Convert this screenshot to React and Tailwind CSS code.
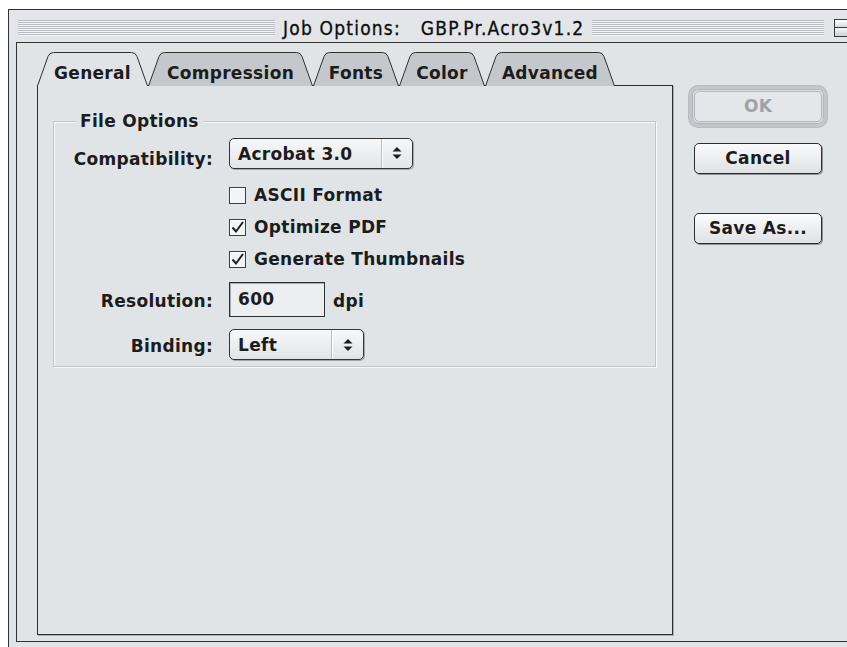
import React from 'react'

// Platinum-style "Job Options" dialog
const TABS = [
  { label: 'General', width: 111, active: true },
  { label: 'Compression', width: 165 },
  { label: 'Fonts', width: 86 },
  { label: 'Color', width: 86 },
  { label: 'Advanced', width: 130 },
]

function Tab({ label, width, active }) {
  const w = width
  const d = `M0.5 34 L11 4.5 Q12.4 0.5 16.5 0.5 L${w - 16.5} 0.5 Q${w - 12.4} 0.5 ${w - 11} 4.5 L${w - 0.5} 34`
  return (
    <div className={`relative h-[33px] shrink-0 ${active ? 'z-10' : ''}`} style={{ width: w }}>
      <svg className="absolute left-0 top-0 overflow-visible" width={w} height={34} viewBox={`0 0 ${w} 34`}>
        <path d={d} fill={active ? '#e1e4e7' : '#c4c8cd'} stroke="#2f2f2f" strokeWidth="1" />
        {active && <rect x="1" y="33" width={w - 2} height="2" fill="#e1e4e7" />}
      </svg>
      <div className="relative pt-[11px] text-center leading-[20px]">{label}</div>
    </div>
  )
}

function PopupArrows() {
  return (
    <svg width="10" height="14" viewBox="0 0 10 14">
      <path d="M5 1 L9.5 5.5 L0.5 5.5 Z" fill="#1e1e1e" />
      <path d="M5 13 L9.5 8.5 L0.5 8.5 Z" fill="#1e1e1e" />
    </svg>
  )
}

function Popup({ value, width, menuWidth = 31 }) {
  return (
    <div
      className="flex h-[31px] items-stretch rounded-[5px] border border-[#353535] bg-gradient-to-b from-[#f7f8f9] to-[#e2e4e7] shadow-[1px_1px_0_#a3a7ab]"
      style={{ width }}
    >
      <div className="flex-1 pl-[8px] pt-[1px] leading-[28px]">{value}</div>
      <div
        className="flex items-center justify-center border-l border-[#b9bdc1] shadow-[inset_1px_0_0_#ffffff]"
        style={{ width: menuWidth }}
      >
        <PopupArrows />
      </div>
    </div>
  )
}

function Checkbox({ checked, label }) {
  return (
    <div className="flex h-[32px] items-center">
      <div className="flex h-[17px] w-[17px] items-center justify-center border border-[#3e3e3e] bg-[#f3f4f5] shadow-[inset_1px_1px_0_#ffffff]">
        {checked && (
          <svg width="15" height="15" viewBox="0 0 15 15">
            <path d="M2.5 7.5 L6 11.5 L13 2" fill="none" stroke="#1f1f1f" strokeWidth="2" />
          </svg>
        )}
      </div>
      <span className="ml-[8px] leading-[20px]">{label}</span>
    </div>
  )
}

function PushButton({ children, disabled }) {
  if (disabled) {
    return (
      <div className="h-[41px] w-[138px] rounded-[9px] border-[3px] border-[#c3c7cb] bg-[#d9dce0] p-[2px] shadow-[inset_0_0_0_1px_#b1b5ba,0_0_0_1px_#b9bdc1]">
        <div className="flex h-full items-center justify-center rounded-[5px] border border-[#b4b8bd] bg-[#e4e6e9] text-[#9ea2a7]">
          {children}
        </div>
      </div>
    )
  }
  return (
    <div className="flex h-[31px] w-[128px] items-center justify-center rounded-[5px] border border-[#2f2f2f] bg-gradient-to-b from-[#fbfbfc] to-[#dfe1e4] shadow-[1px_1px_0_#8f9398]">
      {children}
    </div>
  )
}

function TitleStripes({ className }) {
  return (
    <div
      className={`h-[16px] bg-[repeating-linear-gradient(to_bottom,#b9bcc0_0px,#b9bcc0_1px,#f2f3f4_1px,#f2f3f4_2px)] ${className}`}
    />
  )
}

export default function App() {
  return (
    <div className="h-[647px] w-[847px] overflow-hidden bg-white font-['DejaVu_Sans',sans-serif] text-[17px] font-bold tracking-[0.3px] text-[#1c1c1c]">
      <div className="ml-[8px] mt-[9px] flex h-[660px] w-[852px] flex-col border-l border-t border-[#333333] bg-[#e1e4e7]">
        {/* title bar */}
        <div className="flex h-[32px] shrink-0 items-center bg-[#e3e5e8] pt-[3px]">
          <TitleStripes className="ml-[9px] w-[257px]" />
          <div className="mx-[8px] whitespace-pre font-['DejaVu_Sans_Condensed','DejaVu_Sans',sans-serif] text-[19px] font-normal leading-[20px] tracking-[1.2px] text-[#0d0d0d] [-webkit-text-stroke:0.3px_#0d0d0d]">
            Job Options:   GBP.Pr.Acro3v1.2
          </div>
          <TitleStripes className="flex-1" />
          <div className="ml-[10px] mr-[8px] flex h-[18px] w-[18px] flex-col border border-[#3a3a3a] bg-[#dcdfe2]">
            <div className="h-[8px] border-b border-[#3a3a3a] bg-gradient-to-b from-[#ffffff] to-[#d6d9dc]" />
            <div className="flex-1 bg-gradient-to-b from-[#f4f5f6] to-[#cfd2d6]" />
          </div>
        </div>

        {/* window content */}
        <div className="ml-[7px] flex h-[600px] border-b border-l border-t border-[#333333] pl-[20px] pt-[9px]">
          <div className="flex w-[636px] flex-col">
            <div className="flex">
              {TABS.map((t) => (
                <Tab key={t.label} {...t} />
              ))}
            </div>

            <div className="h-[550px] border border-[#2f2f2f] shadow-[1px_1px_0_#a9adb2]">
              <div className="relative ml-[15px] mr-[16px] mt-[35px] border border-[#c2c6cb] pb-[6px] pt-[15px] shadow-[inset_1px_1px_0_#f7f8f9,1px_1px_0_#f7f8f9]">
                <div className="absolute left-[22px] top-[-11px] bg-[#e1e4e7] px-[4px] leading-[20px]">File Options</div>

                <div className="flex items-center">
                  <div className="w-[159px] pt-[12px] text-right leading-[20px]">Compatibility:</div>
                  <div className="ml-[16px]">
                    <Popup value="Acrobat 3.0" width={184} />
                  </div>
                </div>

                <div className="ml-[175px] mt-[10px]">
                  <Checkbox label="ASCII Format" />
                  <Checkbox checked label="Optimize PDF" />
                  <Checkbox checked label="Generate Thumbnails" />
                </div>

                <div className="mt-[7px] flex items-center">
                  <div className="w-[159px] pt-[2px] text-right leading-[20px]">Resolution:</div>
                  <div className="ml-[16px] flex h-[35px] w-[96px] items-center border border-[#2f2f2f] bg-[#eceef0] pl-[8px] shadow-[inset_1px_1px_0_#a7abb0]">
                    600
                  </div>
                  <div className="ml-[8px] pt-[2px] leading-[20px]">dpi</div>
                </div>

                <div className="mt-[12px] flex items-center">
                  <div className="w-[159px] pt-[3px] text-right leading-[20px]">Binding:</div>
                  <div className="ml-[16px]">
                    <Popup value="Left" width={135} menuWidth={32} />
                  </div>
                </div>
              </div>
            </div>
          </div>

          {/* dialog buttons */}
          <div className="ml-[16px] flex w-[138px] flex-col items-center pt-[34px]">
            <PushButton disabled>OK</PushButton>
            <div className="mt-[16px]">
              <PushButton>Cancel</PushButton>
            </div>
            <div className="mt-[39px]">
              <PushButton>Save As...</PushButton>
            </div>
          </div>
        </div>
      </div>
    </div>
  )
}
